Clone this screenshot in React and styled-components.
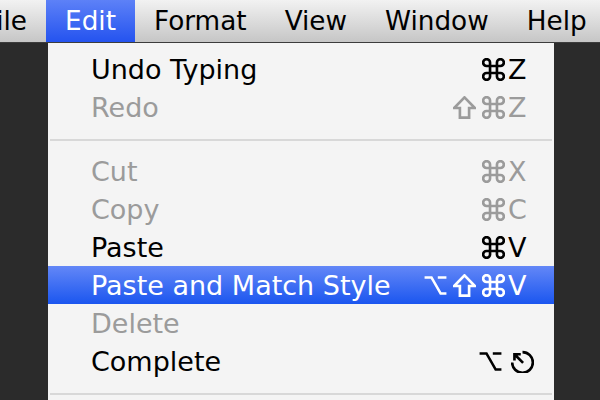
import styled, { createGlobalStyle } from 'styled-components';

const GlobalStyle = createGlobalStyle`
    html, body {
        margin: 0;
        padding: 0;
        background: #2b2b2b;
    }
    body {
        font-family: "DejaVu Sans", "Liberation Sans", sans-serif;
    }
`;

// key glyphs drawn by hand so they get the heavier Lucida look
const glyphs = {
    cmd: (
        <path d="M15 6v12a3 3 0 1 0 3-3H6a3 3 0 1 0 3 3V6a3 3 0 1 0-3 3h12a3 3 0 1 0-3-3" />
    ),
    shift: <path d="M12 3.2 21 12.4h-5v8.4H8v-8.4H3z" />,
    opt: <path d="M2.5 5h6l8 14h5M14 5h7.5" />,
    esc: (
        <>
            <path d="M12 3.8a9 9 0 1 1-9 9" />
            <path d="M12.5 13.2 5 5.7M5 11.2V5.7h5.5" />
        </>
    ),
};

const barItems = ['File', 'Edit', 'Format', 'View', 'Window', 'Help'];

const groups = [
    [
        { label: 'Undo Typing', mods: ['cmd'], key: 'Z' },
        { label: 'Redo', mods: ['shift', 'cmd'], key: 'Z', disabled: true },
    ],
    [
        { label: 'Cut', mods: ['cmd'], key: 'X', disabled: true },
        { label: 'Copy', mods: ['cmd'], key: 'C', disabled: true },
        { label: 'Paste', mods: ['cmd'], key: 'V' },
        { label: 'Paste and Match Style', mods: ['opt', 'shift', 'cmd'], key: 'V', highlighted: true },
        { label: 'Delete', disabled: true },
        { label: 'Complete', mods: ['opt'], key: 'esc' },
    ],
];

const Glyph = ({ name }) => (
    <Icon viewBox="2 2 20 20">{glyphs[name]}</Icon>
);

const App = () => {
    return (
        <Page>
            <GlobalStyle />
            <MenuBar>
                {barItems.map((name) => (
                    <BarItem key={name} $active={name === 'Edit'}>{name}</BarItem>
                ))}
            </MenuBar>
            <Menu>
                {groups.map((group, i) => (
                    <div key={i}>
                        {group.map((item) => (
                            <MenuItem
                                key={item.label}
                                $disabled={item.disabled}
                                $highlighted={item.highlighted}
                            >
                                <Label>{item.label}</Label>
                                {item.key && (
                                    <Shortcut>
                                        <Mods>
                                            {item.mods.map((m) => <Glyph key={m} name={m} />)}
                                        </Mods>
                                        {glyphs[item.key] ? (
                                            <Key $glyph>
                                                <EscIcon viewBox="2 2 20 20">{glyphs[item.key]}</EscIcon>
                                            </Key>
                                        ) : (
                                            <Key>{item.key}</Key>
                                        )}
                                    </Shortcut>
                                )}
                            </MenuItem>
                        ))}
                        <Separator />
                    </div>
                ))}
            </Menu>
        </Page>
    );
};

const Page = styled.div`
    width: 600px;
    height: 400px;
    overflow: hidden;
    background: #2b2b2b;
`;

const MenuBar = styled.div`
    display: flex;
    height: 42px;
    border-bottom: 1px solid #3c3c3c;
    background: linear-gradient(#f2f2f2, #c6c6c6);
    overflow: hidden;
    white-space: nowrap;
`;

const BarItem = styled.div`
    flex: none;
    padding: 0 19px;
    line-height: 42px;
    height: 43px;
    font-size: 26.3px;
    color: ${(p) => (p.$active ? '#fff' : '#000')};
    background: ${(p) => (p.$active ? 'linear-gradient(#5d81f7, #2352ef)' : 'transparent')};

    &:first-child {
        margin-left: -36px;
    }
`;

const Menu = styled.div`
    margin-left: 48px;
    width: 506px;
    height: 357px;
    padding-top: 7px;
    box-sizing: border-box;
    background: #f4f4f4;
`;

const MenuItem = styled.div`
    display: flex;
    align-items: center;
    height: 38px;
    padding: 0 22px 0 43px;
    font-size: 27px;
    white-space: nowrap;
    color: ${(p) => (p.$highlighted ? '#fff' : p.$disabled ? '#9b9b9b' : '#000')};
    background: ${(p) => (p.$highlighted ? 'linear-gradient(#6387f7, #1b56ef)' : 'transparent')};
`;

const Label = styled.span`
    flex: 1;
`;

const Shortcut = styled.span`
    display: flex;
    align-items: center;
`;

const Mods = styled.span`
    display: flex;
    gap: 6px;
`;

const Icon = styled.svg`
    width: 23px;
    height: 23px;
    fill: none;
    stroke: currentColor;
    stroke-width: 2.3;
    stroke-linejoin: miter;
`;

const EscIcon = styled(Icon)`
    display: block;
    width: 23px;
    height: 23px;
    flex: none;
`;

const Key = styled.span`
    display: flex;
    align-items: center;
    width: ${(p) => (p.$glyph ? '21px' : '24px')};
    margin-left: ${(p) => (p.$glyph ? '9px' : '3px')};
`;

const Separator = styled.div`
    height: 2px;
    margin: 13px 2px 11px;
    background: #d8d8d8;
`;

export default App;
